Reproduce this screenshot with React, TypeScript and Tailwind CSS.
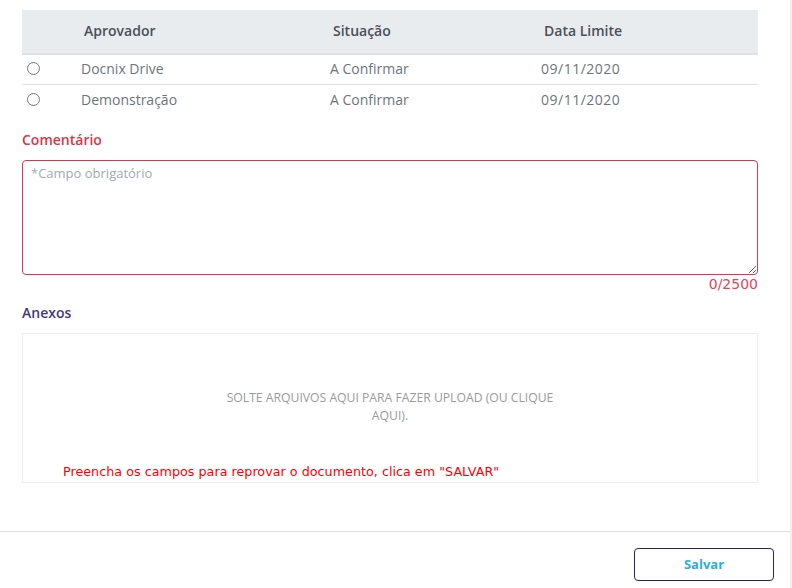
const rows = [
  { nome: 'Docnix Drive', situacao: 'A Confirmar', data: '09/11/2020' },
  { nome: 'Demonstração', situacao: 'A Confirmar', data: '09/11/2020' },
];

const cols = 'grid grid-cols-[59px_249px_211px_1fr]';

const App = () => {
  return (
    <div className="flex w-[792px] h-[588px] bg-white font-['Open_Sans',sans-serif] overflow-hidden">
      <div className="flex-1 flex flex-col">
        <div className="pl-[22px] pr-[32px] pt-[10px]">
          {/* tabela de aprovadores */}
          <div className={`${cols} h-[45px] pb-[3px] items-center bg-[#e9ecef] border-b-2 border-[#dee2e6] text-[14px] font-semibold text-[#495057]`}>
            <div />
            <div className="pl-[3px]">Aprovador</div>
            <div className="pl-[3px]">Situação</div>
            <div className="pl-[3px]">Data Limite</div>
          </div>
          {rows.map((r, i) => (
            <div
              key={r.nome}
              className={`${cols} h-[30px] pb-[2px] items-center text-[14px] text-[#6c757d] ${i === 0 ? 'border-b border-[#dee2e6]' : ''}`}
            >
              <div className="flex items-center pl-[5px]">
                <input type="radio" name="aprovador" className="w-[13px] h-[13px] m-0" />
              </div>
              <div>{r.nome}</div>
              <div>{r.situacao}</div>
              <div className="tracking-[0.5px]">{r.data}</div>
            </div>
          ))}

          <div className="mt-[15px] h-[20px] text-[14px] leading-[20px] font-semibold text-[#dc3545]">Comentário</div>
          <textarea
            placeholder="*Campo obrigatório"
            className="mt-[10px] block w-full h-[115px] rounded-[4px] border border-[#dc3545] px-[8px] py-[2px] text-[13px] leading-[20px] text-[#495057] placeholder:text-[#a3a9b0] outline-none"
          />
          <div className="text-right text-[14px] leading-[18px] text-[#e5435a] font-['DejaVu_Sans',sans-serif]">0/2500</div>

          <div className="mt-[10px] h-[20px] text-[14px] leading-[20px] font-semibold text-[#453a7a]">Anexos</div>
          <div className="mt-[10px] h-[150px] border border-[#ececec] flex flex-col">
            <div className="mt-[55px] mx-auto w-[340px] text-center text-[12.2px] leading-[18px] text-[#9a9a9a]">
              SOLTE ARQUIVOS AQUI PARA FAZER UPLOAD (OU CLIQUE AQUI).
            </div>
            <div className="mt-[39px] pl-[40px] text-[12.75px] leading-[16px] text-[#ff0000] font-['DejaVu_Sans',sans-serif]">
              Preencha os campos para reprovar o documento, clica em "SALVAR"
            </div>
          </div>
        </div>

        <div className="mt-[48px] border-t border-[#dedede] flex justify-end pr-[16px] pt-[16px]">
          <button className="w-[140px] h-[33px] rounded-[4px] border border-[#2e1d6e] bg-white text-[13px] font-bold text-[#2aaee0]">
            Salvar
          </button>
        </div>
      </div>
      <div className="w-[2px] bg-[#f0f0f0]" />
    </div>
  );
};

export default App;
